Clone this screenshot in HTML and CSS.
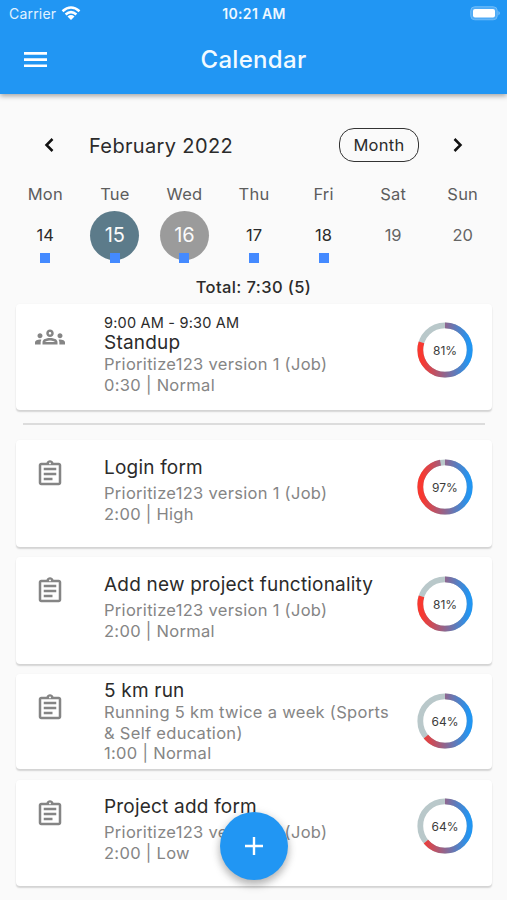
FILE: index.html
```html
<!DOCTYPE html>
<html lang="en">
<head>
<meta charset="utf-8">
<title>Calendar</title>
<link rel="stylesheet" href="styles.css">
</head>
<body>
<svg class="defs" width="0" height="0" aria-hidden="true">
  <defs>
    <linearGradient id="progress" gradientUnits="userSpaceOnUse" x1="28" y1="5" x2="28" y2="52">
      <stop offset="0" stop-color="#f9382f"/><stop offset="1" stop-color="#2196f3"/>
    </linearGradient>
    <symbol id="clipboard" viewBox="0 0 24 24">
      <path d="M7 15h7v2H7zm0-4h10v2H7zm0-4h10v2H7zm12-4h-4.180C14.400 1.840 13.300 1 12 1c-1.300 0-2.400.84-2.820 2H5c-1.100 0-2 .9-2 2v14c0 1.100.9 2 2 2h14c1.100 0 2-.9 2-2V5c0-1.100-.9-2-2-2zm-7-.25c.41 0 .75.34.75.75s-.34.75-.75.75-.75-.34-.75-.75.34-.75.750-.75zM19 19H5V5h14v14z"/>
    </symbol>
  </defs>
</svg>
<header class="header">
  <div class="status">
    <div class="carrier">Carrier
      <svg class="wifi" width="20" height="15" viewBox="0 0 20 15"><g fill="none" stroke="#fff" stroke-width="2.500"><path d="M1.500 5.200Q10-2.200 18.500 5.200"/><path d="M4.600 8.500Q10 3.800 15.400 8.500"/></g><path fill="#fff" d="M6.500 10.400Q10 7.500 13.500 10.400L10 14z"/></svg>
    </div>
    <div class="clock">10:21 AM</div>
    <svg class="battery" width="31" height="15" viewBox="0 0 31 15"><rect x=".75" y=".75" width="26.500" height="13" rx="4" fill="#4fabf6" stroke="#6fbcf8"/><rect x="3" y="3" width="22" height="8.500" rx="2" fill="#fff"/><path d="M28.500 5q2.500 2.200 0 4.500z" fill="#8ac8f9"/></svg>
  </div>
  <div class="appbar">
    <svg class="menu" width="24" height="16" viewBox="0 0 24 16"><path fill="#fff" d="M0 0h23v2.700H0zM0 6.200h23v2.700H0zM0 12.400h23v2.700H0z"/></svg>
    <h1 class="title">Calendar</h1>
  </div>
</header>
<main>
  <div class="month">
    <svg class="chevron" width="10" height="14" viewBox="0 0 10 14"><path d="M8.500 1L2.500 7l6 6"/></svg>
    <h2 class="month-name">February 2022</h2>
    <div class="toggle">Month</div>
    <svg class="chevron" width="10" height="14" viewBox="0 0 10 14"><path d="M1.500 1l6 6-6 6"/></svg>
  </div>
  <div class="week">
    <div class="day"><span class="name">Mon</span><span class="num marked">14</span></div>
    <div class="day"><span class="name">Tue</span><span class="num marked round selected">15</span></div>
    <div class="day"><span class="name">Wed</span><span class="num marked round today">16</span></div>
    <div class="day"><span class="name">Thu</span><span class="num marked">17</span></div>
    <div class="day"><span class="name">Fri</span><span class="num marked">18</span></div>
    <div class="day"><span class="name">Sat</span><span class="num weekend">19</span></div>
    <div class="day"><span class="name">Sun</span><span class="num weekend">20</span></div>
  </div>
  <div class="total">Total: 7:30 (5)</div>
  <section class="list">
    <article class="card first">
      <svg class="icon people" width="30" height="30" viewBox="0 0 24 24"><path d="M4 13c1.100 0 2-.9 2-2s-.9-2-2-2-2 .9-2 2 .9 2 2 2zm1.130 1.100C4.760 14.040 4.390 14 4 14c-.99 0-1.930.21-2.780.58C.48 14.900 0 15.620 0 16.430V18h4.500v-1.610c0-.83.23-1.610.63-2.290zM20 13c1.100 0 2-.9 2-2s-.9-2-2-2-2 .9-2 2 .9 2 2 2zm4 3.430c0-.81-.48-1.530-1.220-1.850C21.930 14.210 20.990 14 20 14c-.39 0-.76.04-1.130.1.400.68.630 1.460.630 2.290V18H24v-1.570zM16.240 13.650C15.070 13.130 13.630 12.750 12 12.750s-3.070.39-4.240.9C6.680 14.130 6 15.210 6 16.390V18h12v-1.610c0-1.180-.68-2.260-1.760-2.740zM8.070 16c.09-.23.13-.39.91-.69.970-.38 1.990-.56 3.020-.56s2.050.18 3.020.56c.77.300.81.460.910.69H8.070zM12 8c.55 0 1 .45 1 1s-.45 1-1 1-1-.45-1-1 .45-1 1-1m0-2c-1.660 0-3 1.340-3 3s1.340 3 3 3 3-1.340 3-3-1.340-3-3-3z"/></svg>
      <div class="body">
        <div class="time">9:00 AM - 9:30 AM</div>
        <h3 class="name-line">Standup</h3>
        <p class="meta">Prioritize123 version 1 (Job)</p>
        <p class="meta">0:30 | Normal</p>
      </div>
      <div class="ring"><svg width="56" height="56" viewBox="0 0 56 56"><circle class="track" cx="28" cy="28" r="24.700"/><circle class="arc" cx="28" cy="28" r="24.700" pathLength="100" stroke-dasharray="80 100"/></svg><span>81%</span></div>
    </article>
    <hr class="divider">
    <article class="card">
      <svg class="icon" width="30" height="30"><use href="#clipboard"/></svg>
      <div class="body">
        <h3 class="name-line">Login form</h3>
        <p class="meta">Prioritize123 version 1 (Job)</p>
        <p class="meta">2:00 | High</p>
      </div>
      <div class="ring"><svg width="56" height="56" viewBox="0 0 56 56"><circle class="track" cx="28" cy="28" r="24.700"/><circle class="arc" cx="28" cy="28" r="24.700" pathLength="100" stroke-dasharray="97 100"/></svg><span>97%</span></div>
    </article>
    <article class="card">
      <svg class="icon" width="30" height="30"><use href="#clipboard"/></svg>
      <div class="body">
        <h3 class="name-line">Add new project functionality</h3>
        <p class="meta">Prioritize123 version 1 (Job)</p>
        <p class="meta">2:00 | Normal</p>
      </div>
      <div class="ring"><svg width="56" height="56" viewBox="0 0 56 56"><circle class="track" cx="28" cy="28" r="24.700"/><circle class="arc" cx="28" cy="28" r="24.700" pathLength="100" stroke-dasharray="80 100"/></svg><span>81%</span></div>
    </article>
    <article class="card three-line">
      <svg class="icon" width="30" height="30"><use href="#clipboard"/></svg>
      <div class="body">
        <h3 class="name-line">5 km run</h3>
        <p class="meta">Running 5 km twice a week (Sports<br>&amp; Self education)</p>
        <p class="meta">1:00 | Normal</p>
      </div>
      <div class="ring"><svg width="56" height="56" viewBox="0 0 56 56"><circle class="track" cx="28" cy="28" r="24.700"/><circle class="arc" cx="28" cy="28" r="24.700" pathLength="100" stroke-dasharray="64 100"/></svg><span>64%</span></div>
    </article>
    <article class="card last">
      <svg class="icon" width="30" height="30"><use href="#clipboard"/></svg>
      <div class="body">
        <h3 class="name-line">Project add form</h3>
        <p class="meta">Prioritize123 version 1 (Job)</p>
        <p class="meta">2:00 | Low</p>
      </div>
      <div class="ring"><svg width="56" height="56" viewBox="0 0 56 56"><circle class="track" cx="28" cy="28" r="24.700"/><circle class="arc" cx="28" cy="28" r="24.700" pathLength="100" stroke-dasharray="64 100"/></svg><span>64%</span></div>
    </article>
  </section>
</main>
<button class="fab" aria-label="Add"><svg width="18" height="18" viewBox="0 0 18 18"><path d="M9 0v18M0 9h18" stroke="#fff" stroke-width="2.400"/></svg></button>
</body>
</html>
```
FILE: styles.css
```css
* { box-sizing: border-box; margin: 0; padding: 0; }
body {
  height: 900px;
  overflow: hidden;
  background: #fafafa;
  font-family: Inter, "Liberation Sans", sans-serif;
  color: #2b2b2b;
}
h1, h2, h3 { font-weight: 400; }
.defs { position: absolute; }
.header {
  height: 94px;
  background: #2196f3;
  color: #fff;
  box-shadow: 0 2px 5px rgba(0, 0, 0, .35);
}
.status {
  display: grid;
  grid-template-columns: 1fr auto 1fr;
  align-items: center;
  height: 27px;
  padding: 0 6px 0 9px;
}
.carrier { display: flex; align-items: center; gap: 5px; font-size: 14px; letter-spacing: .2px; color: #e2f2ff; }
.clock { margin-right: 2px; font-size: 14px; font-weight: 600; letter-spacing: .35px; color: #eef8ff; }
.battery { justify-self: end; }
.appbar {
  display: grid;
  grid-template-columns: 72px 1fr 72px;
  align-items: center;
  height: 65px;
}
.menu { margin-left: 24px; }
.title { text-align: center; font-size: 24px; font-weight: 500; letter-spacing: .3px; color: #f2faff; }
.month {
  display: flex;
  align-items: center;
  height: 34px;
  margin-top: 34px;
  padding: 0 44px;
}
.chevron { fill: none; stroke: #111; stroke-width: 2.500; }
.month-name { flex: 1; margin-left: 35px; font-size: 20px; letter-spacing: .35px; line-height: 26px; padding-top: 1px; }
.toggle {
  width: 80px;
  height: 34px;
  margin-right: 34px;
  border: 1.500px solid #333;
  border-radius: 15px;
  line-height: 33px;
  text-align: center;
  font-size: 16.500px;
  letter-spacing: .3px;
}
.week {
  display: grid;
  grid-template-columns: repeat(7, 1fr);
  height: 108px;
  padding: 19px 9.500px 0 10.500px;
}
.day { display: flex; flex-direction: column; align-items: center; }
.name { height: 30px; line-height: 26px; font-size: 16.500px; letter-spacing: .2px; color: #5d5d5d; }
.num { position: relative; width: 49px; height: 49px; line-height: 49px; text-align: center; font-size: 16.500px; }
.weekend { color: #656565; }
.round { border-radius: 50%; font-size: 20px; color: #fafafa; }
.selected { background: #5c7b8a; }
.today { background: #9b9b9b; }
.marked::after {
  content: "";
  position: absolute;
  left: 19.500px;
  top: 42px;
  width: 10px;
  height: 10px;
  background: #448aff;
}
.total { height: 34px; line-height: 34px; text-align: center; font-size: 16.500px; font-weight: 500; letter-spacing: .4px; }
.list { padding: 0 15px 0 16px; }
.card {
  display: grid;
  grid-template-columns: 88px 1fr 76px;
  height: 107px;
  margin-bottom: 10px;
  padding-top: 16px;
  border-radius: 4px;
  background: #fff;
  box-shadow: 0 2px 1.500px rgba(0, 0, 0, .15), 0 0 2px rgba(0, 0, 0, .04);
}
.icon { margin: 3px 0 0 19px; fill: #858585; }
.name-line { height: 27px; line-height: 24px; font-size: 19px; letter-spacing: .2px; white-space: nowrap; }
.meta { line-height: 20.700px; font-size: 16.500px; letter-spacing: .3px; color: #858585; white-space: nowrap; }
.ring { position: relative; width: 56px; height: 56px; margin-top: 3px; margin-left: 1px; }
.ring svg { display: block; }
.ring circle { fill: none; stroke-width: 5.800; }
.ring .track { stroke: #b9c8ca; }
.ring .arc { stroke: url(#progress); }
.arc { transform: rotate(-90deg); transform-origin: 28px 28px; }
.ring span { position: absolute; inset: 0; line-height: 57px; text-align: center; font-size: 12px; color: #3c3c3c; }
.first { height: 106px; margin-bottom: 13px; padding-top: 10px; }
.first .icon { margin-top: 8px; }
.first .name-line { height: 22px; line-height: 22px; }
.first .ring { margin-top: 8px; }
.time { height: 18px; line-height: 18px; font-size: 14.500px; letter-spacing: .2px; }
.divider { height: 2px; margin: 0 7px 15px; border: 0; background: #dcdcdc; }
.three-line { height: 95px; margin-bottom: 11px; padding-top: 5px; }
.three-line .name-line { height: 23px; }
.three-line .icon { margin-top: 14px; }
.three-line .ring { margin-top: 14px; }
.last { height: 106px; padding-top: 15px; }
.last .icon { margin-top: 4px; }
.fab {
  position: absolute;
  left: 220px;
  top: 812px;
  display: flex;
  align-items: center;
  justify-content: center;
  width: 68px;
  height: 68px;
  border: 0;
  border-radius: 50%;
  background: #2196f3;
  box-shadow: 0 5px 8px rgba(0, 0, 0, .25), 0 1px 10px rgba(0, 0, 0, .1);
}
```
